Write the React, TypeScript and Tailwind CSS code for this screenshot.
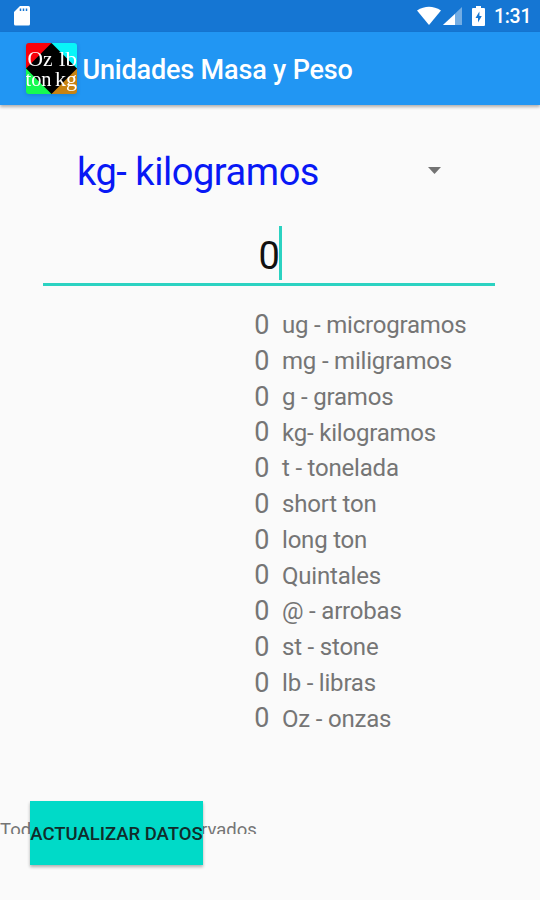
const units = [
  "ug - microgramos",
  "mg - miligramos",
  "g - gramos",
  "kg- kilogramos",
  "t - tonelada",
  "short ton",
  "long ton",
  "Quintales",
  "@ - arrobas",
  "st - stone",
  "lb - libras",
  "Oz - onzas",
];

function StatusBar() {
  return (
    <header className="flex h-[31.5px] items-center bg-[#1576d3] text-white">
      <svg className="ml-[14px] h-[20px] w-[17px]" viewBox="0 0 17 20">
        <path d="M6 0H14.500Q16 0 16 1.500V18Q16 19.500 14.500 19.500H1.500Q0 19.500 0 18V6Z" fill="#fff" />
        <path d="M6.500 2.500v2.500M9.500 2.500v2.500M12.500 2.500v2.500" stroke="#1576d3" strokeWidth="1.500" />
      </svg>
      <svg className="ml-auto h-[20px] w-[46px]" viewBox="0 0 46 20">
        <path d="M0 4.500Q12 -3 24 4.500L12 19Z" fill="#fff" />
        <path d="M45 1V19H26Z" fill="#73ade4" />
        <path d="M38 8V19H26Z" fill="#fff" />
      </svg>
      <svg className="ml-[9px] h-[20px] w-[13px]" viewBox="0 0 13 20">
        <path d="M4 0H9V2H12Q13 2 13 3V19Q13 20 12 20H1Q0 20 0 19V3Q0 2 1 2H4Z" fill="#fff" />
        <path d="M7.400 5.500L3.500 12H6V16.500L9.800 10H7.400Z" fill="#1576d3" />
      </svg>
      <span className="mt-px mr-[11px] ml-[9px] w-[35px] text-[19.5px] leading-none font-medium tracking-[-0.3px] whitespace-nowrap">1:31</span>
    </header>
  );
}

function AppLogo() {
  return (
    <svg className="h-[51px] w-[51px] shrink-0 drop-shadow-sm" viewBox="0 0 51 51">
      <defs>
        <clipPath id="logo-clip"><rect width="51" height="51" rx="3" /></clipPath>
      </defs>
      <g clipPath="url(#logo-clip)">
        <rect width="26" height="26" fill="#f9000a" />
        <rect x="25" width="26" height="26" fill="#08f5f8" />
        <rect y="25" width="26" height="26" fill="#16fa50" />
        <rect x="25" y="25" width="26" height="26" fill="#c88312" />
        <path d="M25.500 0L51 25.500L25.500 51L0 25.500Z" fill="#000" />
        <g fill="#fff" fontFamily="Liberation Serif, serif" fontSize="22">
          <text x="1.5" y="22.500" textLength="25" lengthAdjust="spacingAndGlyphs">Oz</text>
          <text x="33" y="22.500" textLength="18" lengthAdjust="spacingAndGlyphs">lb</text>
          <text x="-0.5" y="43" textLength="26" lengthAdjust="spacingAndGlyphs">ton</text>
          <text x="29" y="43" textLength="22" lengthAdjust="spacingAndGlyphs">kg</text>
        </g>
      </g>
    </svg>
  );
}

export default function App() {
  return (
    <div className="flex h-[900px] w-[540px] flex-col overflow-hidden bg-[#fafafa] font-[Roboto,sans-serif]">
      <StatusBar />
      <div className="z-10 flex h-[73.5px] items-center bg-[#2196f3] pl-[26px] shadow-[0_2px_3px_rgba(0,0,0,0.3)]">
        <AppLogo />
        <h1 className="mt-[4px] ml-[5.5px] text-[27px] leading-none font-medium tracking-[-0.17px] whitespace-nowrap text-white">Unidades Masa y Peso</h1>
      </div>
      <main className="flex flex-1 flex-col">
        <div className="mt-[42px] flex h-[50px] items-center pl-[77px] text-[38px] tracking-[-0.45px] whitespace-nowrap text-[#0818f5]">
          <span className="w-[351px]">kg- kilogramos</span>
          <svg className="mb-[3px] h-[7px] w-[13px]" viewBox="0 0 13 7">
            <path d="M0 0H13L6.500 7Z" fill="#737373" />
          </svg>
        </div>
        <div className="mr-[45px] ml-[43px] mt-[29px] flex h-[60px] justify-center border-b-[3px] border-[#2bd2c1]">
          <div className="ml-[3px] flex h-[54px] items-center border-r-[3px] border-[#2bd2c1] text-[38px] text-[#111]">
            <span className="mt-[6px] tracking-[-0.5px]">0</span>
          </div>
        </div>
        <ul className="mt-[21.5px] text-[#757575]">
          {units.map((unit) => (
            <li key={unit} className="flex h-[35.75px] leading-[35.7px] whitespace-nowrap">
              <span className="w-[269.5px] pt-[0.5px] text-right text-[27px]">0</span>
              <span className="ml-[12.5px] pt-[0.75px] text-[24px] tracking-[-0.2px]">{unit}</span>
            </li>
          ))}
        </ul>
        <footer className="relative mt-auto h-[99px]">
          <p className="mt-[18px] h-[14.500px] overflow-hidden text-[18.500px] leading-[22px] whitespace-nowrap text-[#757575]">Todos los derechos reservados</p>
          <button className="absolute top-0 left-[30px] flex h-[63.500px] w-[173px] items-center justify-center bg-[#00dac8] pt-[4px] text-[18.500px] font-medium whitespace-nowrap text-[#102c2b] shadow-[0_2px_3px_rgba(0,0,0,0.3)]">ACTUALIZAR DATOS</button>
        </footer>
      </main>
    </div>
  );
}
